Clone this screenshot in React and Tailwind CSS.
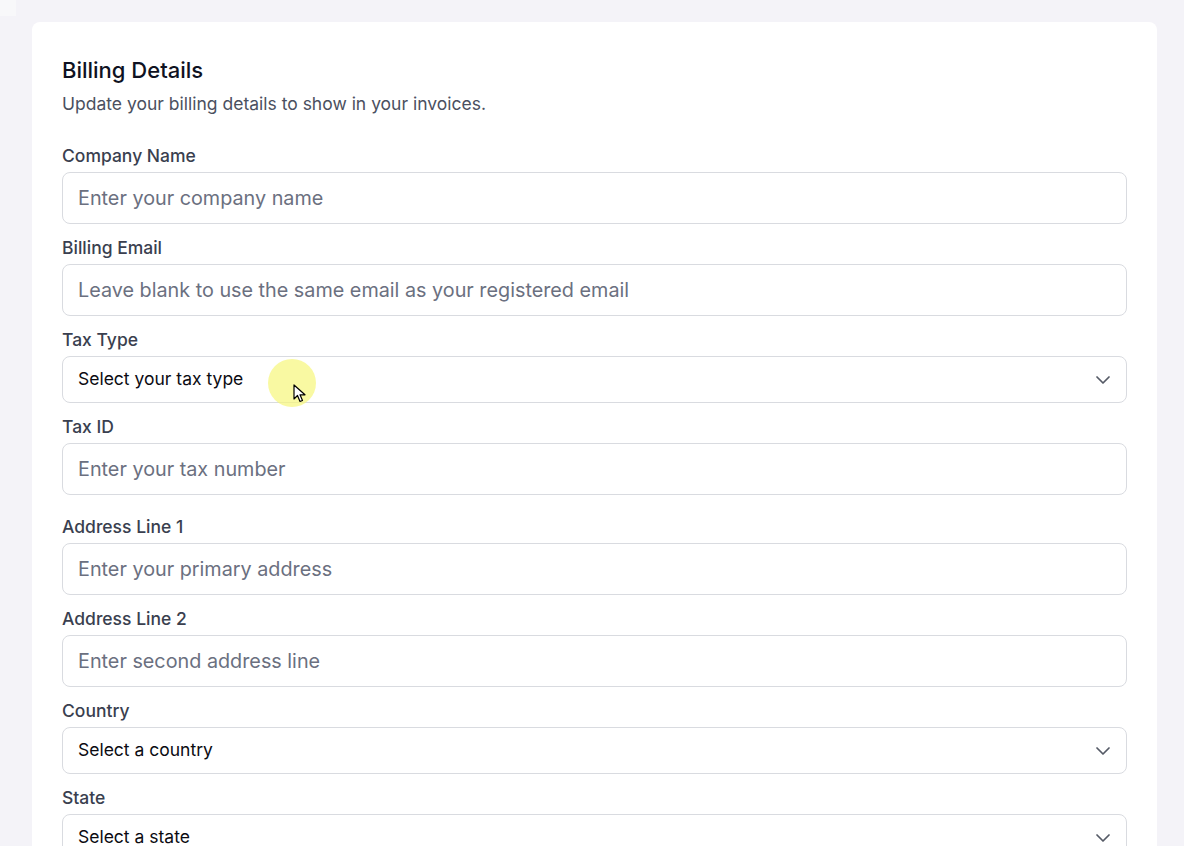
import { ChevronDown } from 'lucide-react';

const font = { fontFamily: 'Inter, "Noto Sans", sans-serif' };

const TextField = ({ label, placeholder, className = '' }) => (
  <div className={`flex flex-col ${className}`}>
    <label className="text-[17.5px] leading-6 font-medium text-[#3a3f4f]">{label}</label>
    <input
      type="text"
      placeholder={placeholder}
      className="mt-[4px] h-[52px] w-full rounded-lg border border-[#d9dbe0] bg-white px-[15px] text-[19.8px] text-[#111827] placeholder:text-[#6b7080] outline-none"
    />
  </div>
);

const SelectField = ({ label, value, className = '' }) => (
  <div className={`flex flex-col ${className}`}>
    <label className="text-[17.5px] leading-6 font-medium text-[#3a3f4f]">{label}</label>
    <button
      type="button"
      className="mt-[4px] flex h-[47px] w-full items-center justify-between rounded-lg border border-[#d9dbe0] bg-white pl-[15px] pr-[11px] text-left text-[17.5px] text-[#0b0b12]"
    >
      <span>{value}</span>
      <ChevronDown className="h-6 w-6 text-[#555a66]" strokeWidth={1.75} />
    </button>
  </div>
);

export default function App() {
  return (
    <div className="relative min-h-screen bg-[#f4f3f8] pt-[22px] pl-[32px] pr-[27px]" style={font}>
      <div className="absolute left-0 top-0 h-4 w-4 bg-[#f8f8fa]" />
      <div className="rounded-lg bg-white px-[30px] pt-[30px] pb-10">
        <h1 className="text-[22px] leading-9 font-medium text-[#0f1222]">Billing Details</h1>
        <p className="text-[17.5px] leading-8 text-[#4b5060]">
          Update your billing details to show in your invoices.
        </p>

        <div className="mt-[24px] flex flex-col gap-3">
          <TextField label="Company Name" placeholder="Enter your company name" />
          <TextField
            label="Billing Email"
            placeholder="Leave blank to use the same email as your registered email"
          />
          <SelectField label="Tax Type" value="Select your tax type" />
          <TextField label="Tax ID" placeholder="Enter your tax number" />
          <TextField label="Address Line 1" placeholder="Enter your primary address" className="mt-2" />
          <TextField label="Address Line 2" placeholder="Enter second address line" />
          <SelectField label="Country" value="Select a country" />
          <SelectField label="State" value="Select a state" />
        </div>
      </div>

      {/* cursor highlight from the recording */}
      <div className="pointer-events-none absolute left-[268px] top-[359px] h-12 w-12 rounded-full bg-[#f6f67a]/70" />
      <svg
        className="pointer-events-none absolute left-[293px] top-[384px]"
        width="14"
        height="20"
        viewBox="0 0 14 20"
      >
        <path d="M1 1 L1 15 L4.5 11.5 L7 17.5 L9.5 16.5 L7 10.8 L12 10.8 Z" fill="white" stroke="black" strokeWidth="1.2" strokeLinejoin="round" />
      </svg>
    </div>
  );
}
